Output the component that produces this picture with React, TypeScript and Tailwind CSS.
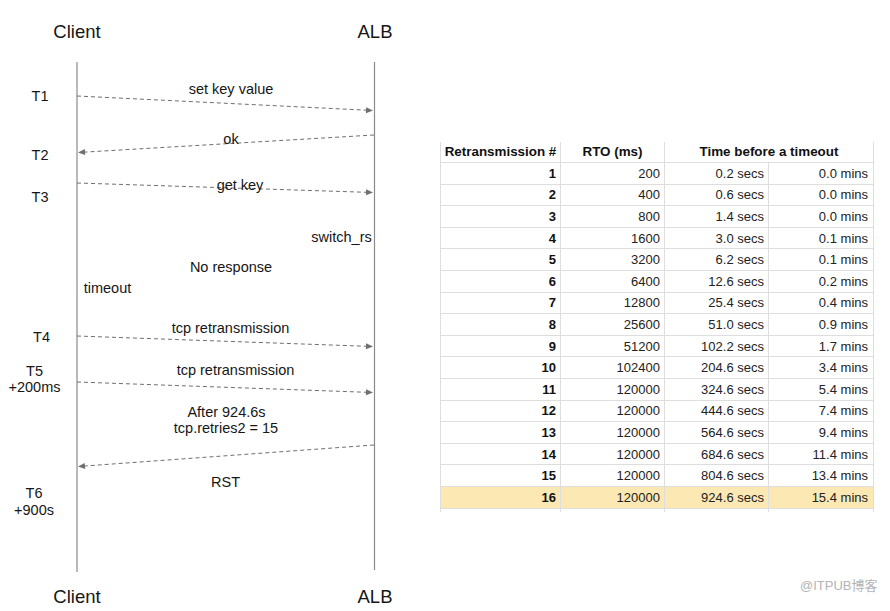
import React from "react";

type Arrow = { x1: number; y1: number; x2: number; y2: number };

const arrows: Arrow[] = [
  { x1: 77, y1: 96, x2: 373, y2: 110.5 },
  { x1: 374, y1: 135, x2: 78, y2: 152.5 },
  { x1: 77, y1: 183, x2: 373, y2: 192.5 },
  { x1: 77, y1: 336, x2: 373, y2: 346.5 },
  { x1: 77, y1: 382, x2: 373, y2: 392.5 },
  { x1: 374, y1: 445, x2: 78, y2: 466.5 },
];

const rows: [number, number, string, string][] = [
  [1, 200, "0.2", "0.0"],
  [2, 400, "0.6", "0.0"],
  [3, 800, "1.4", "0.0"],
  [4, 1600, "3.0", "0.1"],
  [5, 3200, "6.2", "0.1"],
  [6, 6400, "12.6", "0.2"],
  [7, 12800, "25.4", "0.4"],
  [8, 25600, "51.0", "0.9"],
  [9, 51200, "102.2", "1.7"],
  [10, 102400, "204.6", "3.4"],
  [11, 120000, "324.6", "5.4"],
  [12, 120000, "444.6", "7.4"],
  [13, 120000, "564.6", "9.4"],
  [14, 120000, "684.6", "11.4"],
  [15, 120000, "804.6", "13.4"],
  [16, 120000, "924.6", "15.4"],
];

function Diagram() {
  return (
    <svg className="absolute inset-0" width="440" height="611" viewBox="0 0 440 611">
      <line x1="77" y1="62" x2="77" y2="572" stroke="#8a8a8a" strokeWidth="1.2" />
      <line x1="374.5" y1="62" x2="374.5" y2="570" stroke="#8a8a8a" strokeWidth="1.2" />
      {arrows.map((a, i) => {
        const ang = (Math.atan2(a.y2 - a.y1, a.x2 - a.x1) * 180) / Math.PI;
        const len = Math.hypot(a.x2 - a.x1, a.y2 - a.y1);
        const ux = (a.x2 - a.x1) / len;
        const uy = (a.y2 - a.y1) / len;
        return (
          <g key={i}>
            <line
              x1={a.x1}
              y1={a.y1}
              x2={a.x2 - ux * 6}
              y2={a.y2 - uy * 6}
              stroke="#6f6f6f"
              strokeWidth="1"
              strokeDasharray="4 3"
            />
            <polygon
              points="0,0 -7,-3 -7,3"
              fill="#6f6f6f"
              transform={`translate(${a.x2},${a.y2}) rotate(${ang})`}
            />
          </g>
        );
      })}
    </svg>
  );
}

export default function App() {
  return (
    <div className="relative flex w-[890px] h-[611px] overflow-hidden bg-white text-[#161616] font-['Liberation_Sans',Arial,sans-serif]">
      <div className="relative w-[440px] h-full shrink-0">
        <Diagram />
        <div className="absolute left-[77px] top-[31.5px] -translate-x-1/2 -translate-y-1/2 leading-none whitespace-nowrap text-[18.5px]">Client</div>
        <div className="absolute left-[375px] top-[31.5px] -translate-x-1/2 -translate-y-1/2 leading-none whitespace-nowrap text-[18.5px]">ALB</div>
        <div className="absolute left-[77px] top-[597px] -translate-x-1/2 -translate-y-1/2 leading-none whitespace-nowrap text-[18.5px]">Client</div>
        <div className="absolute left-[375px] top-[597px] -translate-x-1/2 -translate-y-1/2 leading-none whitespace-nowrap text-[18.5px]">ALB</div>

        <div className="absolute left-[40px] top-[96px] -translate-x-1/2 -translate-y-1/2 leading-none whitespace-nowrap text-[14.5px]">T1</div>
        <div className="absolute left-[40px] top-[154.5px] -translate-x-1/2 -translate-y-1/2 leading-none whitespace-nowrap text-[14.5px]">T2</div>
        <div className="absolute left-[40px] top-[197px] -translate-x-1/2 -translate-y-1/2 leading-none whitespace-nowrap text-[14.5px]">T3</div>
        <div className="absolute left-[41.5px] top-[337px] -translate-x-1/2 -translate-y-1/2 leading-none whitespace-nowrap text-[14.5px]">T4</div>
        <div className="absolute left-[34.5px] top-[370.5px] -translate-x-1/2 -translate-y-1/2 leading-none whitespace-nowrap text-[14.5px]">T5</div>
        <div className="absolute left-[34.5px] top-[387px] -translate-x-1/2 -translate-y-1/2 leading-none whitespace-nowrap text-[14.5px]">+200ms</div>
        <div className="absolute left-[34px] top-[493px] -translate-x-1/2 -translate-y-1/2 leading-none whitespace-nowrap text-[14.5px]">T6</div>
        <div className="absolute left-[34px] top-[510px] -translate-x-1/2 -translate-y-1/2 leading-none whitespace-nowrap text-[14.5px]">+900s</div>

        <div className="absolute left-[231px] top-[88.5px] -translate-x-1/2 -translate-y-1/2 leading-none whitespace-nowrap text-[14.5px]">set key value</div>
        <div className="absolute left-[231px] top-[138.5px] -translate-x-1/2 -translate-y-1/2 leading-none whitespace-nowrap text-[14.5px]">ok</div>
        <div className="absolute left-[240px] top-[185px] -translate-x-1/2 -translate-y-1/2 leading-none whitespace-nowrap text-[14.5px]">get key</div>
        <div className="absolute left-[341.5px] top-[237px] -translate-x-1/2 -translate-y-1/2 leading-none whitespace-nowrap text-[14.5px]">switch_rs</div>
        <div className="absolute left-[231px] top-[267px] -translate-x-1/2 -translate-y-1/2 leading-none whitespace-nowrap text-[14.5px]">No response</div>
        <div className="absolute left-[107.5px] top-[288px] -translate-x-1/2 -translate-y-1/2 leading-none whitespace-nowrap text-[14.5px]">timeout</div>
        <div className="absolute left-[230.5px] top-[327.5px] -translate-x-1/2 -translate-y-1/2 leading-none whitespace-nowrap text-[14.5px]">tcp retransmission</div>
        <div className="absolute left-[235.5px] top-[369.5px] -translate-x-1/2 -translate-y-1/2 leading-none whitespace-nowrap text-[14.5px]">tcp retransmission</div>
        <div className="absolute left-[226.5px] top-[411.5px] -translate-x-1/2 -translate-y-1/2 leading-none whitespace-nowrap text-[14.5px]">After 924.6s</div>
        <div className="absolute left-[226px] top-[428px] -translate-x-1/2 -translate-y-1/2 leading-none whitespace-nowrap text-[14.5px]">tcp.retries2 = 15</div>
        <div className="absolute left-[225.5px] top-[482px] -translate-x-1/2 -translate-y-1/2 leading-none whitespace-nowrap text-[14.5px]">RST</div>
      </div>

      <div className="pt-[142px]">
        <table className="table-fixed border-collapse w-[433px] text-[13px] text-[#222]">
          <colgroup>
            <col className="w-[120px]" />
            <col className="w-[104px]" />
            <col className="w-[104px]" />
            <col className="w-[105px]" />
          </colgroup>
          <thead>
            <tr className="h-[20.5px]">
              <th className="border-x border-b border-[#dedede] p-0 text-center align-middle text-[13.4px] font-bold text-[#111] leading-none">Retransmission #</th>
              <th className="border-x border-b border-[#dedede] p-0 text-center align-middle text-[13.4px] font-bold text-[#111] leading-none">RTO (ms)</th>
              <th colSpan={2} className="border-x border-b border-[#dedede] p-0 text-center align-middle text-[13.4px] font-bold text-[#111] leading-none">Time before a timeout</th>
            </tr>
          </thead>
          <tbody>
            {rows.map(([n, rto, secs, mins]) => {
              const hl = n === 16;
              return (
                <tr key={n} className={hl ? "h-[21.6px] bg-[#fce8b2]" : "h-[21.6px]"}>
                  <td className="border border-[#dedede] p-0 pr-1 text-right align-middle font-bold text-[#111] leading-none">{n}</td>
                  <td className="border border-[#dedede] p-0 pr-1 text-right align-middle leading-none">{rto}</td>
                  <td className="border border-[#dedede] p-0 pr-1 text-right align-middle leading-none">{secs} secs</td>
                  <td className="border border-[#dedede] p-0 pr-[5px] text-right align-middle leading-none">{mins} mins</td>
                </tr>
              );
            })}
            <tr className="h-[4px]">
              <td className="border-x border-[#dedede] p-0"></td>
              <td className="border-x border-[#dedede] p-0"></td>
              <td className="border-x border-[#dedede] p-0"></td>
              <td className="border-x border-[#dedede] p-0"></td>
            </tr>
          </tbody>
        </table>
      </div>

      <div className="absolute left-[800px] top-[579px] whitespace-nowrap leading-none text-[13px] text-[#b4b4b4] font-['Liberation_Sans','Noto_Sans_CJK_SC',sans-serif]">@ITPUB博客</div>
    </div>
  );
}
